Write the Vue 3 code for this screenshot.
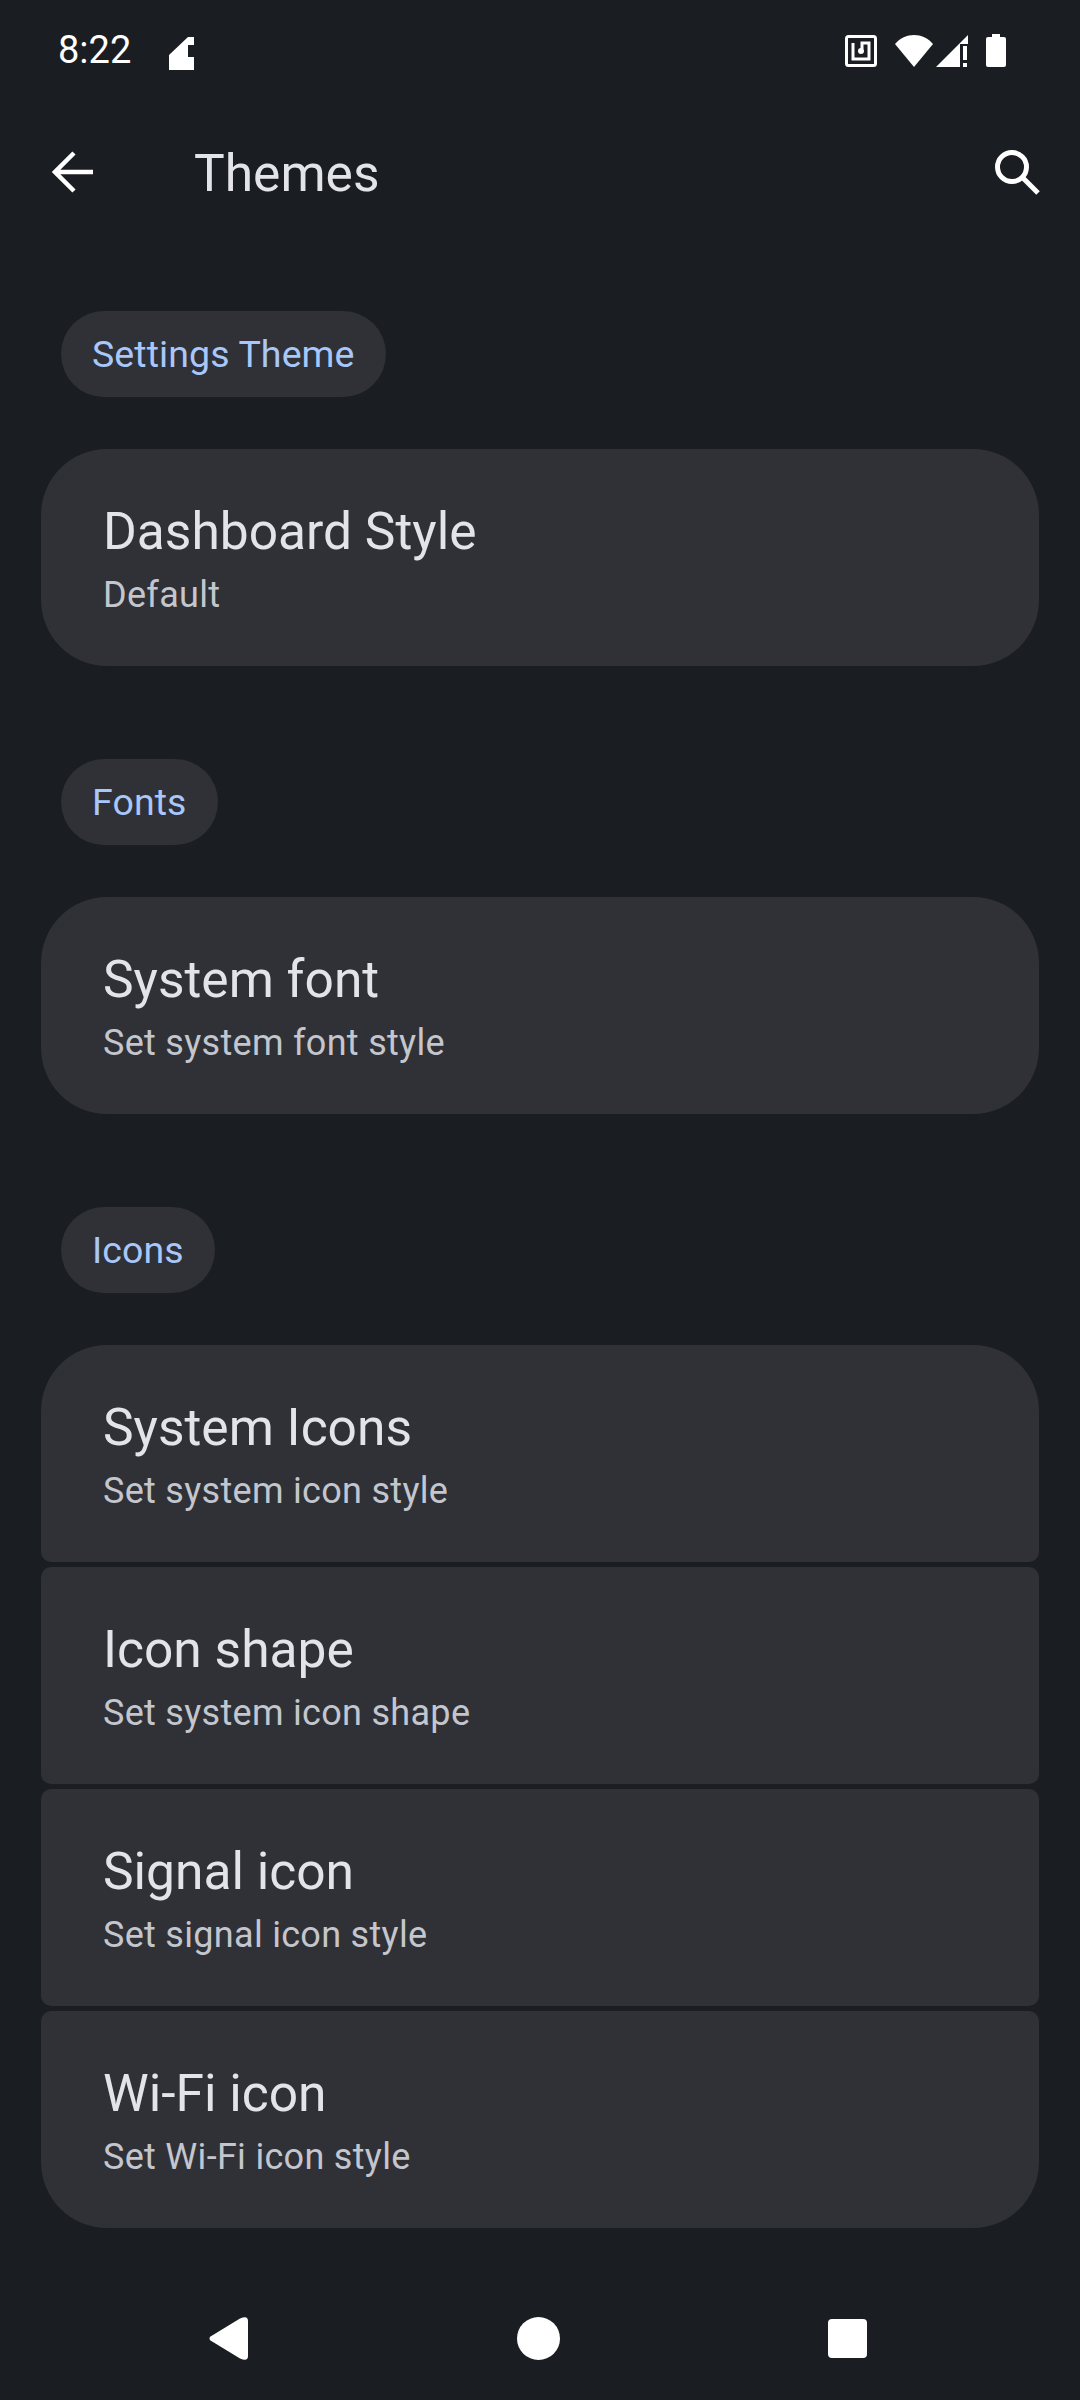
<template>
  <div class="screen">
    <div class="status-bar">
      <span class="clock">8:22</span>
      <svg class="notif" width="25" height="33" viewBox="0 0 25 33">
        <path d="M0 18 L19 0 H25 V8 H19 V20 H25 V33 H0 Z" fill="#fff" />
      </svg>
      <div class="status-icons">
        <svg width="32" height="32" viewBox="0 0 32 32" fill="none" stroke="#fff">
          <rect x="1.5" y="1.5" width="29" height="29" rx="2" stroke-width="3" />
          <path d="M8 8 V24 H24 V8 H17 V14" stroke-width="3" />
          <circle cx="16" cy="16" r="3" fill="#fff" stroke="none" />
        </svg>
        <svg class="wifi" width="38" height="32" viewBox="0 0 38 32">
          <path d="M0 9 C10 -3 28 -3 38 9 L19 32 Z" fill="#fff" />
        </svg>
        <svg class="signal" width="32" height="32" viewBox="0 0 32 32">
          <path d="M0 32 L32 0 V9 H24 V32 Z" fill="#fff" />
          <path d="M27 11 H31 V25 H27 Z M27 28 H31 V32 H27 Z" fill="#fff" />
        </svg>
        <svg class="battery" width="20" height="33" viewBox="0 0 20 33">
          <path d="M6 0 H14 V3 H18 Q20 3 20 5 V31 Q20 33 18 33 H2 Q0 33 0 31 V5 Q0 3 2 3 H6 Z" fill="#fff" />
        </svg>
      </div>
    </div>

    <header class="app-bar">
      <svg class="back" width="42" height="42" viewBox="0 0 42 42" fill="none" stroke="#fff" stroke-width="4.5">
        <path d="M41 21 H3 M22 2 L3 21 L22 40" />
      </svg>
      <h1 class="page-title">Themes</h1>
      <svg class="search" width="46" height="46" viewBox="0 0 46 46" fill="none" stroke="#fff" stroke-width="5">
        <circle cx="18" cy="18" r="14.5" />
        <path d="M28.5 28.5 L44 44" />
      </svg>
    </header>

    <main class="content">
      <section v-for="group in groups" :key="group.label" class="group">
        <div class="pill">{{ group.label }}</div>
        <div class="card-list">
          <div v-for="item in group.items" :key="item.title" class="card">
            <div class="card-title">{{ item.title }}</div>
            <div class="card-sub">{{ item.sub }}</div>
          </div>
        </div>
      </section>
    </main>

    <nav class="nav-bar">
      <svg width="39" height="43" viewBox="0 0 39 43">
        <path d="M1.5 23.5 Q-0.5 21.5 1.5 19.5 L31 1.5 Q39 -2 39 4 V39 Q39 45 31 41.5 Z" fill="#fff" />
      </svg>
      <div class="nav-home"></div>
      <div class="nav-recent"></div>
    </nav>
  </div>
</template>

<script setup>
const groups = [
  {
    label: 'Settings Theme',
    items: [{ title: 'Dashboard Style', sub: 'Default' }]
  },
  {
    label: 'Fonts',
    items: [{ title: 'System font', sub: 'Set system font style' }]
  },
  {
    label: 'Icons',
    items: [
      { title: 'System Icons', sub: 'Set system icon style' },
      { title: 'Icon shape', sub: 'Set system icon shape' },
      { title: 'Signal icon', sub: 'Set signal icon style' },
      { title: 'Wi-Fi icon', sub: 'Set Wi-Fi icon style' }
    ]
  }
]
</script>

<style>
html,
body {
  margin: 0;
  background: #1a1d21;
}
</style>

<style scoped>
.screen {
  width: 1080px;
  height: 2400px;
  display: flex;
  flex-direction: column;
  background: #1a1d21;
  font-family: Roboto, "Open Sans", sans-serif;
  overflow: hidden;
}

.status-bar {
  height: 100px;
  box-sizing: border-box;
  display: flex;
  align-items: flex-start;
  padding: 34px 74px 0 58px;
}

.clock {
  font-family: Roboto, sans-serif;
  font-size: 38px;
  line-height: 33px;
  font-weight: 400;
  color: #fff;
}

.notif {
  margin: 3px 0 0 38px;
}

.status-icons {
  margin-left: auto;
  display: flex;
  align-items: center;
}

.wifi {
  margin-left: 18px;
}

.signal {
  margin-left: 3px;
}

.battery {
  margin-left: 18px;
}

.app-bar {
  height: 144px;
  display: flex;
  align-items: center;
  padding: 0 40px 0 52px;
}

.page-title {
  margin: 2px 0 0 100px;
  font-size: 51.5px;
  font-weight: 400;
  color: #e3e3ea;
}

.search {
  margin-left: auto;
}

.content {
  padding: 67px 41px 0;
  display: flex;
  flex-direction: column;
  gap: 93px;
}

.pill {
  display: inline-block;
  height: 86px;
  line-height: 86px;
  margin-left: 20px;
  padding: 0 31px;
  border-radius: 43px;
  background: #303136;
  color: #a8c7fa;
  font-size: 37.5px;
  letter-spacing: 0.1px;
}

.card-list {
  margin-top: 52px;
  display: flex;
  flex-direction: column;
  gap: 5px;
}

.card {
  height: 217px;
  box-sizing: border-box;
  padding: 52px 62px 0;
  background: #303136;
  border-radius: 10px;
}

.card:first-child {
  border-top-left-radius: 66px;
  border-top-right-radius: 66px;
}

.card:last-child {
  border-bottom-left-radius: 66px;
  border-bottom-right-radius: 66px;
}

.card-title {
  font-size: 51.5px;
  line-height: 62px;
  color: #e3e3ea;
}

.card-sub {
  margin-top: 8px;
  font-size: 36px;
  line-height: 48px;
  letter-spacing: 0.3px;
  color: #c4c6ce;
}

.nav-bar {
  margin-top: auto;
  height: 126px;
  box-sizing: border-box;
  display: flex;
  align-items: flex-start;
  padding: 43px 213px 0 209px;
  justify-content: space-between;
}

.nav-home {
  width: 43px;
  height: 43px;
  border-radius: 50%;
  background: #fff;
}

.nav-recent {
  width: 39px;
  height: 39px;
  margin-top: 2px;
  border-radius: 4px;
  background: #fff;
}
</style>
